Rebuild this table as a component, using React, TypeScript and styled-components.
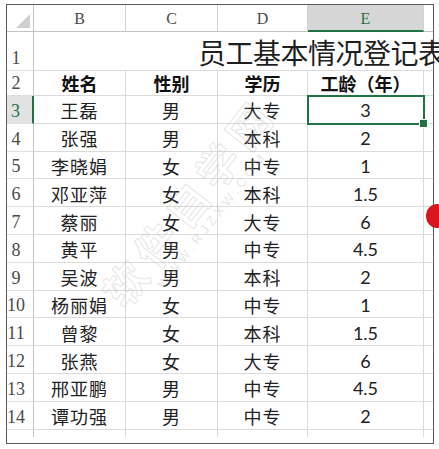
import React from "react";
import styled, { createGlobalStyle } from "styled-components";

const GlobalStyle = createGlobalStyle`
  html, body {
    margin: 0;
    padding: 0;
    background: #ffffff;
    overflow: hidden;
  }
  * { box-sizing: border-box; }
`;

const GREEN = "#217346";
const GRID = "#dadada";
const HEAD_LINE = "#c4c4c4";
const CJK = `"Noto Sans CJK SC", "Noto Sans", sans-serif`;
const SERIF = `"Liberation Serif", "DejaVu Serif", serif`;
const NUM = `Lato, "Liberation Sans", sans-serif`;

const Page = styled.div`
  position: relative;
  width: 439px;
  height: 449px;
  overflow: hidden;
  padding: 4px 0 0 6px;
`;

const Frame = styled.div`
  width: 428px;
  height: 440px;
  border: 1px solid #5c5c5c;
  background: #fff;
`;

const Sheet = styled.div`
  display: grid;
  grid-template-columns: 27px 92px 92px 90px 116px 9px;
  grid-template-rows: 27px 39px 25px repeat(12, 27.8px) 7px;
`;

const Cell = styled.div<{ $last?: boolean; $bottom?: boolean }>`
  display: flex;
  align-items: center;
  justify-content: center;
  border-right: ${(p) => (p.$last ? "none" : `1px solid ${GRID}`)};
  border-bottom: ${(p) => (p.$bottom ? "none" : `1px solid ${GRID}`)};
  min-width: 0;
`;

const Corner = styled(Cell)`
  border-right: 1px solid ${HEAD_LINE};
  border-bottom: 1px solid ${HEAD_LINE};
  justify-content: flex-end;
  align-items: flex-end;
  padding: 0 3px 3px 0;
`;

const ColHeader = styled(Cell)<{ $active?: boolean }>`
  font-family: ${SERIF};
  font-size: 16px;
  color: ${(p) => (p.$active ? GREEN : "#4a4a4a")};
  background: ${(p) => (p.$active ? "#d6d6d6" : "#ffffff")};
  border-right: ${(p) => (p.$last ? "none" : `1px solid #d2d2d2`)};
  border-bottom: ${(p) =>
    p.$active ? `2px solid ${GREEN}` : `1px solid ${HEAD_LINE}`};
  padding-top: 2px;
`;

const RowHeader = styled(Cell)<{ $active?: boolean }>`
  font-family: ${SERIF};
  font-size: 18px;
  line-height: 1;
  color: ${(p) => (p.$active ? GREEN : "#4a4a4a")};
  background: ${(p) => (p.$active ? "#e2e2e2" : "#ffffff")};
  border-right: ${(p) =>
    p.$active ? `2px solid ${GREEN}` : `1px solid ${HEAD_LINE}`};
  border-bottom: ${(p) => (p.$bottom ? "none" : `1px solid #e0e0e0`)};
  align-items: flex-end;
  padding: 0 8px 3px 0;
`;

const TitleCell = styled(Cell)`
  grid-column: 2 / 7;
  justify-content: flex-start;
  padding: 1px 0 0 164px;
  font-family: ${CJK};
  font-size: 28px;
  letter-spacing: -0.5px;
  color: #1f1f1f;
  white-space: nowrap;
  overflow: visible;
  border-right: none;
`;

const HeadCell = styled(Cell)`
  font-family: ${CJK};
  font-size: 18px;
  font-weight: 700;
  color: #111;
  white-space: nowrap;
`;

const DataCell = styled(Cell)<{ $numeric?: boolean; $selected?: boolean }>`
  position: relative;
  font-family: ${(p) => (p.$numeric ? NUM : CJK)};
  font-size: 18px;
  letter-spacing: ${(p) => (p.$numeric ? "0" : "1px")};
  color: #222;
  padding-top: 2px;
  white-space: nowrap;
  ${(p) =>
    p.$selected &&
    `
    outline: 2px solid ${GREEN};
    outline-offset: -1px;
    z-index: 1;
    &::after {
      content: "";
      position: absolute;
      right: -5px;
      bottom: -5px;
      width: 7px;
      height: 7px;
      background: ${GREEN};
      border: 1px solid #fff;
    }
  `}
`;

const Watermark = styled.div`
  position: absolute;
  left: 118px;
  top: 275px;
  transform: rotate(-52deg);
  transform-origin: left center;
  display: flex;
  flex-direction: column;
  align-items: flex-start;
  pointer-events: none;
  z-index: 2;
`;

const WatermarkBig = styled.span`
  font-family: ${CJK};
  font-size: 42px;
  font-weight: 700;
  letter-spacing: 8px;
  color: transparent;
  -webkit-text-stroke: 1px rgba(180, 180, 180, 0.35);
  line-height: 1;
`;

const WatermarkSmall = styled.span`
  font-family: "Liberation Sans", sans-serif;
  font-size: 13px;
  letter-spacing: 4px;
  color: rgba(180, 180, 180, 0.35);
  margin: 2px 0 0 40px;
`;

const RedDot = styled.div`
  position: absolute;
  left: 426px;
  top: 204px;
  width: 22px;
  height: 24px;
  border-radius: 50%;
  background: #d9161e;
  z-index: 3;
`;

const CornerTriangle = () => (
  <svg width="14" height="14" viewBox="0 0 14 14">
    <polygon points="14,0 14,14 0,14" fill="#cfcfcf" />
  </svg>
);

const data: [string, string, string, string][] = [
  ["王磊", "男", "大专", "3"],
  ["张强", "男", "本科", "2"],
  ["李晓娟", "女", "中专", "1"],
  ["邓亚萍", "女", "本科", "1.5"],
  ["蔡丽", "女", "大专", "6"],
  ["黄平", "男", "中专", "4.5"],
  ["吴波", "男", "本科", "2"],
  ["杨丽娟", "女", "中专", "1"],
  ["曾黎", "女", "本科", "1.5"],
  ["张燕", "女", "大专", "6"],
  ["邢亚鹏", "男", "中专", "4.5"],
  ["谭功强", "男", "中专", "2"],
];

export default function App() {
  return (
    <>
      <GlobalStyle />
      <Page>
        <Frame>
          <Sheet>
            <Corner>
              <CornerTriangle />
            </Corner>
            <ColHeader>B</ColHeader>
            <ColHeader>C</ColHeader>
            <ColHeader>D</ColHeader>
            <ColHeader $active>E</ColHeader>
            <ColHeader $last />

            <RowHeader>1</RowHeader>
            <TitleCell>员工基本情况登记表</TitleCell>

            <RowHeader>2</RowHeader>
            <HeadCell>姓名</HeadCell>
            <HeadCell>性别</HeadCell>
            <HeadCell>学历</HeadCell>
            <HeadCell>工龄（年）</HeadCell>
            <Cell $last />

            {data.map((r, i) => (
              <React.Fragment key={i}>
                <RowHeader $active={i === 0}>{i + 3}</RowHeader>
                <DataCell>{r[0]}</DataCell>
                <DataCell>{r[1]}</DataCell>
                <DataCell>{r[2]}</DataCell>
                <DataCell $numeric $selected={i === 0}>
                  {r[3]}
                </DataCell>
                <Cell $last />
              </React.Fragment>
            ))}

            <RowHeader $bottom />
            <Cell $bottom />
            <Cell $bottom />
            <Cell $bottom />
            <Cell $bottom />
            <Cell $bottom $last />
          </Sheet>
        </Frame>
        <Watermark>
          <WatermarkBig>软件自学网</WatermarkBig>
          <WatermarkSmall>WWW.RJZXW.COM</WatermarkSmall>
        </Watermark>
        <RedDot />
      </Page>
    </>
  );
}
